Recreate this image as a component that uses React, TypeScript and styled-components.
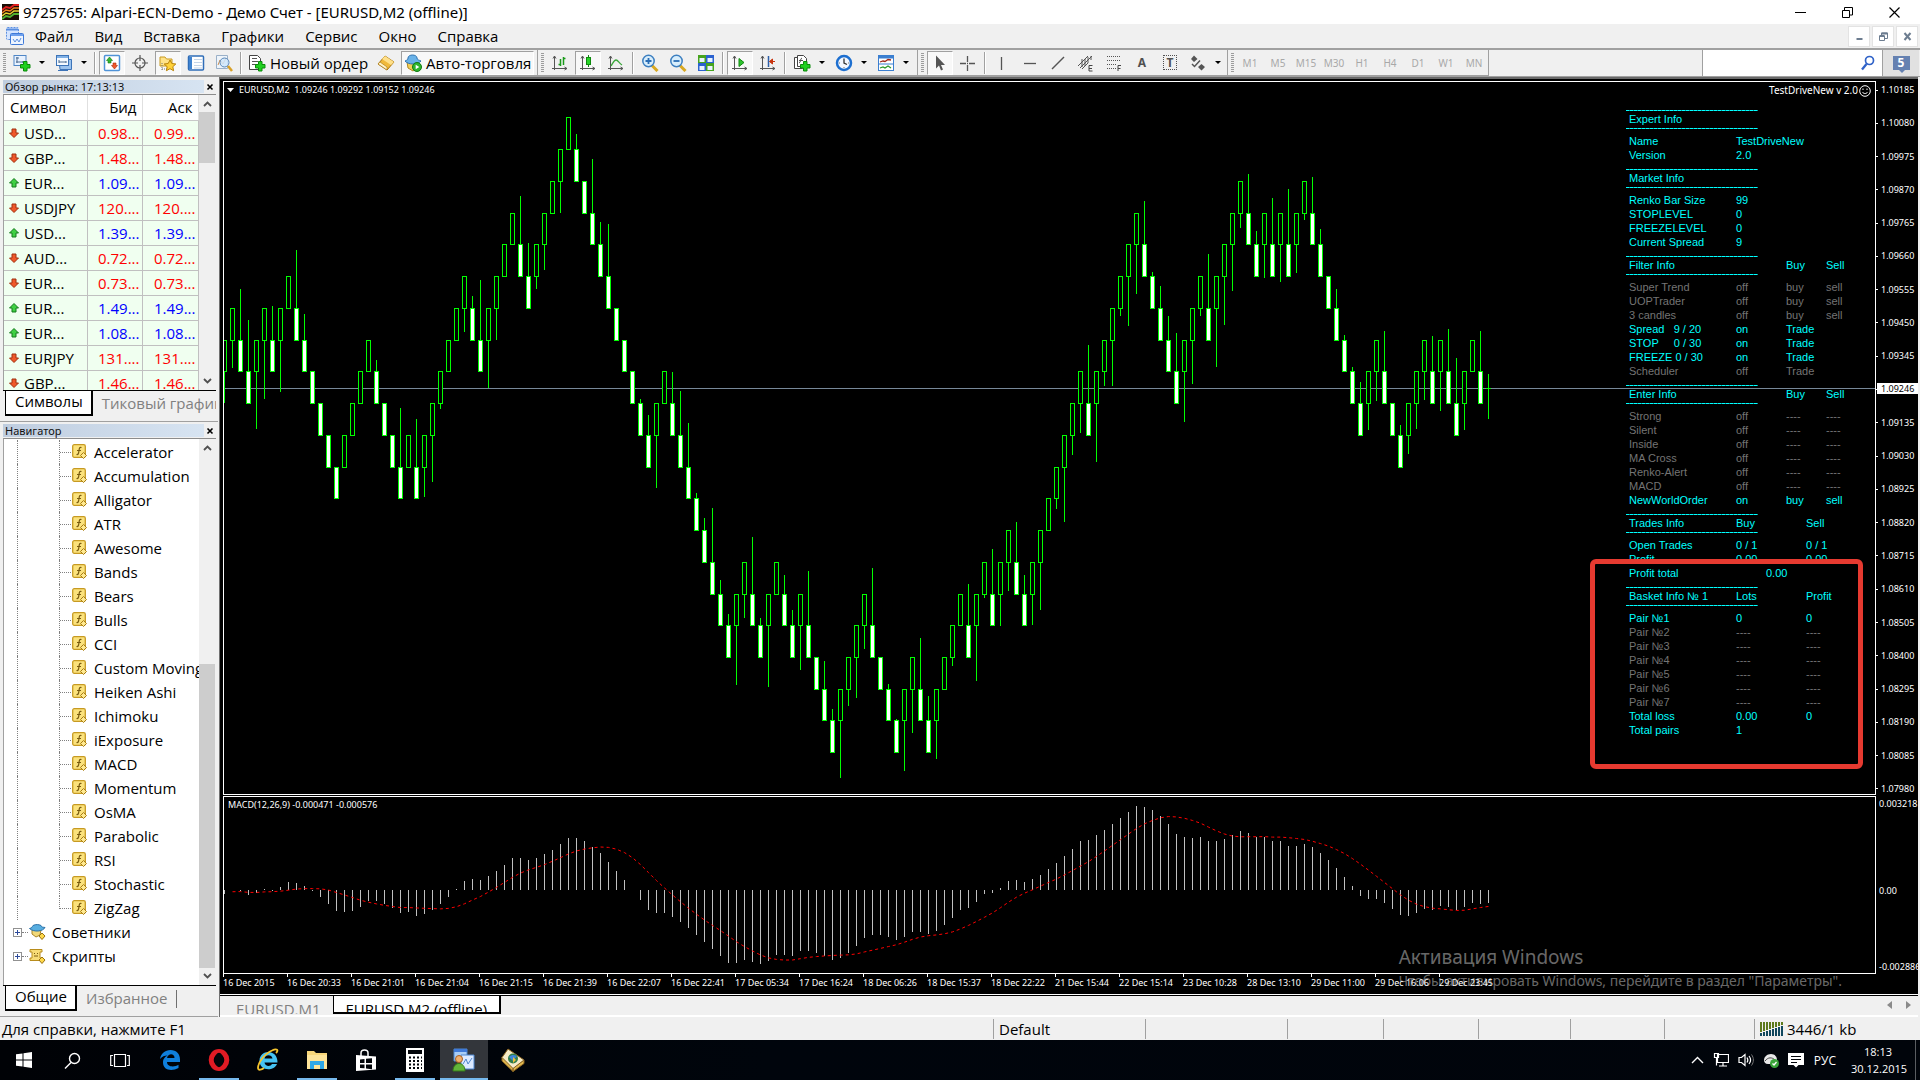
import React from "react";
import styled, { createGlobalStyle, css } from "styled-components";

const UI = `"Open Sans", "Noto Sans", sans-serif`;
const SMALL = `"Noto Sans", "Open Sans", sans-serif`;

const GlobalStyle = createGlobalStyle`
  * { box-sizing: border-box; }
  body { margin: 0; background: #f0f0f0; }
  button { font: inherit; color: inherit; background: none; border: 0; padding: 0; margin: 0; }
  ul, ol { list-style: none; margin: 0; padding: 0; }
  svg { display: block; flex: none; }
`;

/* ---------- shell ---------- */

const Shell = styled.div`
  display: flex;
  flex-direction: column;
  height: 100vh;
  overflow: hidden;
  background: #f0f0f0;
  color: #000;
  font: 15px/20px ${UI};
`;

const TitleBar = styled.header`
  display: flex;
  align-items: center;
  flex: none;
  height: 24px;
  padding: 0 2px;
  background: #fff;
`;

const TitleText = styled.h1`
  flex: 1;
  margin: 0;
  padding-left: 4px;
  font: 15px/20px ${SMALL};
`;

const WindowButton = styled.button`
  display: flex;
  align-items: center;
  justify-content: center;
  width: 47px;
  height: 22px;
`;

const MenuBar = styled.nav`
  display: flex;
  align-items: center;
  flex: none;
  height: 26px;
  padding-left: 5px;
  border-bottom: 2px solid #a0a0a0;
`;

const MenuList = styled.ul`
  display: flex;
  flex: 1;
`;

const MenuItem = styled.button`
  padding: 0 11px 0 10px;
  line-height: 22px;
`;

const ChildButton = styled.button`
  display: flex;
  align-items: center;
  justify-content: center;
  width: 22px;
  height: 21px;
  margin-right: 2px;
  background: #fff;
  border: 1px solid #e3e3e3;
`;

/* ---------- toolbar ---------- */

const ToolRow = styled.div`
  display: flex;
  flex: none;
  height: 27px;
  border-bottom: 1px solid #a0a0a0;
`;

const Group = styled.div<{ $w: number }>`
  display: flex;
  align-items: center;
  flex: none;
  gap: 2px;
  width: ${(p) => p.$w}px;
  padding-left: 3px;
  border-right: 1px solid #a0a0a0;
  border-bottom: 1px solid #a0a0a0;
  background: #f0f0f0;
`;

const Grip = styled.span`
  width: 3px;
  height: 20px;
  margin-right: 1px;
  background: repeating-linear-gradient(#9c9c9c 0 1px, #f0f0f0 1px 2px);
`;

const Sep = styled.span`
  width: 2px;
  height: 22px;
  margin: 0 1px;
  border-left: 1px solid #a0a0a0;
  border-right: 1px solid #fff;
`;

const Tool = styled.button<{ $on?: boolean; $wide?: boolean }>`
  display: flex;
  align-items: center;
  justify-content: center;
  flex: none;
  gap: 4px;
  height: 24px;
  width: ${(p) => (p.$wide ? "auto" : "26px")};
  padding: ${(p) => (p.$wide ? "0 2px" : "0")};
  white-space: nowrap;
  border: 1px solid transparent;
  ${(p) =>
    p.$on &&
    css`
      background: #f8f8f8;
      border-color: #a0a0a0 #fff #fff #a0a0a0;
    `}
`;

const Caret = styled.button`
  width: 14px;
  height: 24px;
  margin-left: -2px;
  display: flex;
  align-items: center;
  justify-content: center;
  &::after {
    content: "";
    border: 3px solid transparent;
    border-top-color: #000;
    border-bottom: 0;
  }
`;

const Period = styled.button`
  width: 26px;
  text-align: center;
  color: #a8a8a8;
  font: 10px/14px ${SMALL};
`;

const Letter = styled.span<{ $boxed?: boolean }>`
  width: 14px;
  text-align: center;
  color: #505050;
  font: bold 12px/13px ${SMALL};
  border: ${(p) => (p.$boxed ? "1px dotted #505050" : "0")};
`;

const ToolFill = styled.div`
  flex: 1;
`;

const Search = styled.label`
  display: flex;
  align-items: center;
  width: 181px;
  padding-right: 7px;
  background: #fff;
  border-left: 1px solid #a0a0a0;
  border-right: 1px solid #a0a0a0;
`;

const SearchInput = styled.input`
  flex: 1;
  min-width: 0;
  border: 0;
  outline: 0;
  background: transparent;
  font: 13px/18px ${UI};
`;

const ChatButton = styled.button`
  display: flex;
  align-items: center;
  justify-content: center;
  width: 36px;
  margin-right: 1px;
  background: #e1e1e1;
`;

const ChatBadge = styled.span`
  position: relative;
  width: 17px;
  height: 14px;
  color: #fff;
  background: #6581b1;
  font: bold 12px/13px ${SMALL};
  &::after {
    content: "";
    position: absolute;
    left: 5px;
    top: 13px;
    border: 4px solid transparent;
    border-top-color: #6581b1;
    border-bottom: 0;
  }
`;

/* ---------- side panels ---------- */

const Body = styled.main`
  display: flex;
  flex: 1;
  min-height: 0;
`;

const Side = styled.aside`
  display: flex;
  flex-direction: column;
  flex: none;
  width: 220px;
  padding-top: 1px;
  border-right: 1px solid #707070;
`;

const Panel = styled.section<{ $grow?: boolean }>`
  display: flex;
  flex-direction: column;
  flex: ${(p) => (p.$grow ? "1" : "none")};
  min-height: 0;
  margin-right: 1px;
  padding: 1px 2px 5px 3px;
  border-bottom: 1px solid #a0a0a0;
`;

const PanelHead = styled.div`
  display: flex;
  align-items: center;
  height: 15px;
`;

const PanelTitle = styled.h2`
  flex: 1;
  margin: 0;
  padding-left: 2px;
  color: #111;
  font: 11px/13px ${SMALL};
  background: linear-gradient(90deg, #bfcddf, #d7e4f2);
`;

const PanelClose = styled.button`
  display: flex;
  justify-content: center;
  width: 12px;
`;

const ListFrame = styled.div<{ $h?: number }>`
  display: flex;
  flex: ${(p) => (p.$h ? "none" : "1")};
  height: ${(p) => (p.$h ? p.$h + "px" : "auto")};
  min-height: 0;
  overflow: hidden;
  background: #fff;
  border-top: 1px solid #8c8c8c;
  border-left: 1px solid #a0a0a0;
`;

const ListBody = styled.div`
  flex: 1;
  min-width: 0;
  overflow: hidden;
`;

const ScrollTrack = styled.div`
  display: flex;
  flex-direction: column;
  align-items: center;
  width: 17px;
  padding: 6px 1px 6px 0;
  background: #f0f0f0;
`;

const Thumb = styled.span<{ $grow: number }>`
  width: 100%;
  flex: ${(p) => p.$grow};
  background: #cdcdcd;
`;

const Gap = styled.span<{ $grow: number }>`
  flex: ${(p) => p.$grow};
`;

const ArrowPad = styled.span`
  height: 5px;
`;

const Quotes = styled.table`
  width: 194px;
  table-layout: fixed;
  border-collapse: collapse;
  th {
    height: 25px;
    padding: 0 5px 0 6px;
    font-weight: 400;
    text-align: right;
    border-right: 1px solid #e0e0e0;
    border-bottom: 1px solid #c8c8c8;
  }
  th:first-child { text-align: left; }
`;

const SymbolCell = styled.td`
  height: 25px;
  padding: 0 0 0 4px;
  background: #f0fff0;
  border-right: 1px solid #c0c0c0;
  border-bottom: 1px solid #c0c0c0;
`;

const SymbolName = styled.span`
  display: flex;
  align-items: center;
  gap: 4px;
  white-space: nowrap;
`;

const PriceCell = styled.td<{ $up: boolean }>`
  padding: 0 2px 0 0;
  text-align: right;
  color: ${(p) => (p.$up ? "#0000ff" : "#ff0000")};
  background: #f0fff0;
  border-right: 1px solid #c0c0c0;
  border-bottom: 1px solid #c0c0c0;
`;

const TabStrip = styled.div`
  display: flex;
  height: 26px;
  padding-left: 2px;
  overflow: hidden;
  border-top: 1px solid #000;
`;

const Tab = styled.button<{ $active?: boolean }>`
  flex: none;
  padding: 0 8px 2px 9px;
  white-space: nowrap;
  color: ${(p) => (p.$active ? "#000" : "#808080")};
  ${(p) =>
    p.$active &&
    css`
      margin-top: -1px;
      background: #fff;
      border: 1px solid #000;
      border-width: 0 2px 2px 1px;
    `}
`;

const TabEnd = styled.span`
  width: 1px;
  height: 18px;
  margin-top: 4px;
  background: #707070;
`;

const Tree = styled.ul`
  padding-top: 1px;
`;

const TreeRow = styled.li`
  display: flex;
  align-items: center;
  height: 24px;
  padding-left: 13px;
  white-space: nowrap;
`;

const Trunk = styled.span`
  flex: none;
  width: 42px;
  height: 24px;
  border-left: 1px dotted #808080;
`;

const Branch = styled.span<{ $last?: boolean }>`
  display: flex;
  flex: none;
  width: 13px;
  height: 24px;
  &::before {
    content: "";
    width: 11px;
    height: 12px;
    border-left: 1px dotted #808080;
    border-bottom: 1px dotted #808080;
  }
  ${(p) => !p.$last && css`border-left: 1px dotted #808080; &::before { border-left: 0; }`}
`;

const TreeLabel = styled.span`
  padding-left: 6px;
`;

const RootRow = styled(TreeRow)`
  padding-left: 9px;
`;

const Expander = styled.button`
  display: flex;
  align-items: center;
  justify-content: center;
  width: 9px;
  height: 9px;
  border: 1px solid #919191;
  background: #fff;
`;

const Dots = styled.span`
  width: 6px;
  margin-right: 1px;
  border-top: 1px dotted #808080;
`;

/* ---------- chart ---------- */

const Work = styled.div`
  display: flex;
  flex-direction: column;
  flex: 1;
  min-width: 0;
  margin-right: 2px;
  border-top: 2px solid #696969;
`;

const ChartWindow = styled.section`
  position: relative;
  display: flex;
  flex-direction: column;
  flex: 1;
  min-height: 0;
  padding: 2px 0 0 3px;
  background: #000;
  color: #fff;
  font: 9px/12px ${SMALL};
`;

const PaneRow = styled.div<{ $h?: number }>`
  display: flex;
  flex: ${(p) => (p.$h ? "none" : "1")};
  height: ${(p) => (p.$h ? p.$h + "px" : "auto")};
  min-height: 0;
  margin-bottom: ${(p) => (p.$h ? 0 : 1)}px;
`;

const Pane = styled.div`
  position: relative;
  flex: 1;
  min-width: 0;
  overflow: hidden;
  border: 1px solid #fff;
`;

const PaneCaption = styled.div<{ $x: number }>`
  position: absolute;
  left: ${(p) => p.$x}px;
  top: 2px;
  display: flex;
  align-items: center;
  gap: 5px;
  white-space: pre;
`;

const ExpertTag = styled.div`
  position: absolute;
  right: 4px;
  top: 2px;
  display: flex;
  align-items: center;
  gap: 1px;
  font: 10px/13px ${SMALL};
`;

const Drawing = styled.svg`
  width: 100%;
  height: 100%;
`;

const Axis = styled.ol`
  position: relative;
  display: flex;
  flex-direction: column;
  justify-content: space-between;
  width: 42px;
  padding: 3px 0 0;
`;

const AxisItem = styled.li`
  display: flex;
  align-items: center;
  gap: 3px;
  height: 12px;
  &::before {
    content: "";
    width: 2px;
    height: 1px;
    background: #fff;
  }
`;

const BidTag = styled.span`
  position: absolute;
  left: 1px;
  right: 0;
  top: 302px;
  padding-left: 4px;
  color: #000;
  background: #fff;
  line-height: 11px;
`;

const MacdAxis = styled.ol`
  display: grid;
  grid-template-rows: 12px 74fr 12px 64fr 12px;
  width: 42px;
  padding: 2px 0 1px;
  overflow: hidden;
`;

const MacdItem = styled.li<{ $row: number }>`
  grid-row: ${(p) => p.$row};
  padding-left: 3px;
  white-space: nowrap;
`;

const Dates = styled.ol`
  display: flex;
  height: 20px;
  overflow: hidden;
`;

const DateItem = styled.li`
  flex: none;
  width: 64px;
  white-space: nowrap;
  &::before {
    content: "";
    display: block;
    width: 1px;
    height: 3px;
    background: #fff;
  }
`;

const Info = styled.div`
  position: absolute;
  right: 20px;
  top: 28px;
  width: 229px;
  font: 11px/14px "Liberation Sans", Arial, sans-serif;
`;

const InfoSection = styled.section`
  padding-bottom: 7px;
`;

const InfoRule = styled.hr`
  width: 132px;
  height: 1px;
  margin: 0;
  border: 0;
  background: repeating-linear-gradient(90deg, #00ffff 0 3px, #00a0a0 3px 4px);
`;

const InfoRow = styled.div<{ $cols: string; $dim?: boolean; $head?: boolean }>`
  display: grid;
  grid-template-columns: ${(p) => p.$cols};
  padding-left: 3px;
  line-height: ${(p) => (p.$head ? 17 : 14)}px;
  white-space: pre;
  color: ${(p) => (p.$dim ? "#747474" : "#00ffff")};
`;

const InfoRows = styled.div`
  padding-top: 5px;
`;

const Highlight = styled.div`
  position: absolute;
  right: 12px;
  top: 477px;
  width: 273px;
  height: 210px;
  border: 5px solid #e63a30;
  border-radius: 6px;
`;

const Watermark = styled.div`
  position: absolute;
  right: 76px;
  bottom: 3px;
  color: rgba(255, 255, 255, 0.42);
  font: 14px/20px ${SMALL};
  white-space: nowrap;
`;

const WatermarkTitle = styled.div`
  font-size: 19px;
  line-height: 28px;
`;

const ChartTabs = styled.div`
  display: flex;
  flex: none;
  height: 23px;
  padding-bottom: 2px;
  border-top: 1px solid #fff;
  border-bottom: 2px solid #fff;
  background: #f0f0f0;
`;

const ChartTabRow = styled.div`
  display: flex;
  flex: 1;
  padding-left: 4px;
  border-top: 1px solid #000;
`;

const ChartTab = styled.button<{ $active?: boolean }>`
  height: 18px;
  padding: 5px 12px 0;
  overflow: hidden;
  line-height: 17px;
  color: ${(p) => (p.$active ? "#000" : "#808080")};
  ${(p) =>
    p.$active &&
    css`
      background: #fff;
      border: 1px solid #000;
      border-width: 0 2px 2px 1px;
    `}
`;

const TabScroll = styled.div`
  display: flex;
  align-items: center;
  gap: 14px;
  margin-left: auto;
  padding-right: 7px;
`;

/* ---------- status + taskbar ---------- */

const Status = styled.footer`
  display: flex;
  align-items: center;
  flex: none;
  height: 23px;
  overflow: hidden;
`;

const StatusText = styled.span`
  flex: 1;
  padding-left: 2px;
`;

const StatusCell = styled.span<{ $w: number }>`
  display: flex;
  align-items: center;
  gap: 3px;
  width: ${(p) => p.$w}px;
  height: 20px;
  padding-left: 5px;
  border-left: 1px solid #a0a0a0;
`;

const TaskBar = styled.div`
  display: flex;
  flex: none;
  height: 40px;
  color: #fff;
  background: linear-gradient(90deg, #000206, #00050c 40%, #01050b);
`;

const TaskButton = styled.button<{ $run?: boolean; $focus?: boolean; $first?: boolean }>`
  display: flex;
  align-items: center;
  justify-content: center;
  width: 48px;
  margin-left: ${(p) => (p.$first ? 0 : 1)}px;
  background: ${(p) => (p.$focus ? "#33363b" : "none")};
  position: relative;
  &::after {
    content: "";
    display: ${(p) => (p.$run ? "block" : "none")};
    position: absolute;
    left: ${(p) => (p.$focus ? 0 : 4)}px;
    right: ${(p) => (p.$focus ? 0 : 4)}px;
    bottom: 0;
    height: 2px;
    background: #76b9ed;
  }
`;

const TaskPinned = styled.div`
  display: flex;
  padding-right: 1px;
`;

const Tray = styled.div`
  display: flex;
  align-items: center;
  gap: 8px;
  margin-left: auto;
  font: 12px/17px ${UI};
`;

const TrayIcons = styled.div`
  display: flex;
  align-items: center;
  gap: 9px;
`;

const Lang = styled.span`
  padding: 0 7px 0 2px;
`;

const Clock = styled.time`
  width: 54px;
  margin-right: 2px;
  text-align: center;
  white-space: nowrap;
  font: 11px/17px ${UI};
`;

const ShowDesktop = styled.button`
  width: 5px;
  height: 40px;
  border-left: 1px solid #5a5d61;
`;

/* ---------- data ---------- */

const LEVELS = [117, 149, 181, 213, 244, 276, 308, 340, 371, 403, 435, 467, 498, 530, 562, 594, 625, 657, 689, 720, 752, 784];

// one entry per brick: upper level, direction, end of the shadow
const BRICKS = `7u403 6u368 7d289 8d320 7u429 6u399 7d306 6u392 5u 6d250 7d314 8d 9d 10d 11d 10u 9u 8u 7u 8d360
9d 10d 11d408 10u 11d419 10u497 9u482 8u409 7u 6u 5u332 6d296 7d280 6u388 5u340 4u 3u 4d196 5d243 4u289
3u270 2u 1u213 0u 1d134 2d 3d159 4d222 5d224 6d 7d 8d 9d399 10d415 9u488 8u 9d372 10d391 11d423 12d493
13d518 14d508 15d580 16d614 15u685 14u618 15d537 16d618 15u687 14u 15d575 16d610 15u670 16d571 17d 18d661 19d709 18u778 17u706 16u698
15u649 16d568 17d 18d684 19d719 18u771 17u733 18d638 19d696 18u759 17u 16u666 15u 16d584 15u681 14u598 15d549 14u626 13u591 14d522
15d575 14u625 13u610 12u 11u509 10u522 9u455 8u433 9d345 8u462 7u386 6u386 5u316 4u326 3u294 4d201 5d272 6d286 7d316 8d333
7u422 6u384 5u316 6d254 5u367 4u325 3u291 2u228 3d174 4d231 3u278 4d198 3u282 4d189 3u273 2u220 3d177 4d229 5d 6d289
7d335 8d367 9d382 8u430 7u401 8d331 9d 10d425 9u454 8u429 7u400 8d336 7u411 8d329 9d358 8u430 7u 8d331`
  .split(/\s+/)
  .map((s) => {
    const m = /^(\d+)([ud])(\d*)$/.exec(s)!;
    return { top: Number(m[1]), up: m[2] === "u", wick: m[3] ? Number(m[3]) : null };
  });

const STEP = 8;
const ORIGIN = 0.5;
const barX = (i: number) => ORIGIN + i * STEP;

function macdSeries() {
  const closes = BRICKS.map((b) => -(b.up ? b.top : b.top + 1));
  closes.push(-8.54);
  let fast = -7.7;
  let slow = -7.5;
  const main = closes.map((c) => {
    fast += (c - fast) * (2 / 13);
    slow += (c - slow) * (2 / 27);
    return (fast - slow) / 1000;
  });
  const signal = main.map((_, i) => {
    const part = main.slice(Math.max(0, i - 8), i + 1);
    return part.reduce((a, b) => a + b, 0) / part.length;
  });
  return { main, signal };
}

const MACD = macdSeries();
const MACD_ZERO = 93;
const macdY = (v: number) => MACD_ZERO - v / 0.000035;

const QUOTES: [string, string, string, boolean][] = [
  ["USD...", "0.98...", "0.99...", false],
  ["GBP...", "1.48...", "1.48...", false],
  ["EUR...", "1.09...", "1.09...", true],
  ["USDJPY", "120....", "120....", false],
  ["USD...", "1.39...", "1.39...", true],
  ["AUD...", "0.72...", "0.72...", false],
  ["EUR...", "0.73...", "0.73...", false],
  ["EUR...", "1.49...", "1.49...", true],
  ["EUR...", "1.08...", "1.08...", true],
  ["EURJPY", "131....", "131....", false],
  ["GBP...", "1.46...", "1.46...", false],
];

const INDICATORS = ["Accelerator", "Accumulation", "Alligator", "ATR", "Awesome", "Bands", "Bears", "Bulls", "CCI", "Custom Moving", "Heiken Ashi", "Ichimoku", "iExposure", "MACD", "Momentum", "OsMA", "Parabolic", "RSI", "Stochastic", "ZigZag"];

const PRICES = ["1.10185", "1.10080", "1.09975", "1.09870", "1.09765", "1.09660", "1.09555", "1.09450", "1.09345", "", "1.09135", "1.09030", "1.08925", "1.08820", "1.08715", "1.08610", "1.08505", "1.08400", "1.08295", "1.08190", "1.08085", "1.07980"];

const DATES = ["16 Dec 2015", "16 Dec 20:33", "16 Dec 21:01", "16 Dec 21:04", "16 Dec 21:15", "16 Dec 21:39", "16 Dec 22:07", "16 Dec 22:41", "17 Dec 05:34", "17 Dec 16:24", "18 Dec 06:26", "18 Dec 15:37", "18 Dec 22:22", "21 Dec 15:44", "22 Dec 15:14", "23 Dec 10:28", "28 Dec 13:10", "29 Dec 11:00", "29 Dec 16:06", "29 Dec 23:45"];

const WIDE = "107px 50px 40px auto";
const PAIR = "107px 70px auto";
const DASH = "----";

type Row = { cells: string[]; dim?: boolean; cols?: string };
type Block = { head: string[]; cols: string; rows: Row[] };

const dim = (...cells: string[]): Row => ({ cells, dim: true });
const lit = (...cells: string[]): Row => ({ cells });

const BLOCKS: Block[] = [
  { head: ["Expert Info"], cols: WIDE, rows: [lit("Name", "TestDriveNew"), lit("Version", "2.0")] },
  { head: ["Market Info"], cols: WIDE, rows: [lit("Renko Bar Size", "99"), lit("STOPLEVEL", "0"), lit("FREEZELEVEL", "0"), lit("Current Spread", "9")] },
  {
    head: ["Filter Info", "", "Buy", "Sell"],
    cols: WIDE,
    rows: [dim("Super Trend", "off", "buy", "sell"), dim("UOPTrader", "off", "buy", "sell"), dim("3 candles", "off", "buy", "sell"), lit("Spread   9 / 20", "on", "Trade"), lit("STOP     0 / 30", "on", "Trade"), lit("FREEZE 0 / 30", "on", "Trade"), dim("Scheduler", "off", "Trade")],
  },
  {
    head: ["Enter Info", "", "Buy", "Sell"],
    cols: WIDE,
    rows: [...["Strong", "Silent", "Inside", "MA Cross", "Renko-Alert", "MACD"].map((n) => dim(n, "off", DASH, DASH)), lit("NewWorldOrder", "on", "buy", "sell")],
  },
  {
    head: ["Trades Info", "Buy", "Sell"],
    cols: PAIR,
    rows: [lit("Open Trades", "0 / 1", "0 / 1"), lit("Profit", "0.00", "0.00"), { cells: ["Profit total", "0.00"], cols: "137px auto" }],
  },
  {
    head: ["Basket Info № 1", "Lots", "Profit"],
    cols: PAIR,
    rows: [lit("Pair №1", "0", "0"), ...[2, 3, 4, 5, 6, 7].map((n) => dim(`Pair №${n}`, DASH, DASH)), lit("Total loss", "0.00", "0"), lit("Total pairs", "1")],
  },
];

/* ---------- icons ---------- */

const Svg = ({ s = 18, w, h, children }: { s?: number; w?: number; h?: number; children: React.ReactNode }) => (
  <svg width={w ?? s} height={h ?? s} viewBox={`0 0 ${w ?? s} ${h ?? s}`} fill="none" aria-hidden="true">
    {children}
  </svg>
);

const Plus = ({ x, y }: { x: number; y: number }) => (
  <path transform={`translate(${x} ${y})`} d="M3.5 .5h3.500v3h3v3.500h-3v3h-3.500v-3h-3v-3.500h3z" fill="#1fd01f" stroke="#0a8a0a" />
);

const AxisMark = () => <path d="M3.500 2v14M1 14.500h15M2 4.500l1.500-2.500 1.500 2.500M13.500 13l2.500 1.500-2.500 1.500" stroke="#555" />;

const I = {
  logo: (
    <Svg w={17} h={18}>
      <path d="M0 1h17v16H0z" fill="#1a0d05" />
      <path d="M0 7l4-3 4 1 4-3 5 0" stroke="#e02020" strokeWidth="2" />
      <path d="M0 10l4-3 4 1 4-3 5 0" stroke="#f08020" strokeWidth="1.500" />
      <path d="M0 13l4-3 4 1 4-3 5 0" stroke="#e8d030" strokeWidth="1.500" />
      <path d="M0 16l4-3 4 1 4-3 5 0" stroke="#50b030" strokeWidth="2" />
    </Svg>
  ),
  doc: (
    <Svg s={20}>
      <rect x="1.500" y="1.500" width="12" height="12" rx="1" fill="#d5e5ff" stroke="#5b8fe0" strokeDasharray="2 1" />
      <path d="M2 3.500h11" stroke="#5b8fe0" strokeWidth="2" />
      <rect x="5.500" y="7.500" width="13" height="11" rx="1" fill="#eef5ff" stroke="#3f7ad8" />
      <path d="M6 9h12" stroke="#6ea0ee" strokeWidth="2" />
      <path d="M8 13l2 3 2-3 2 3 2-4" stroke="#5b8fe0" />
    </Svg>
  ),
  newChart: (
    <Svg>
      <rect x="1" y="1.500" width="12" height="10" fill="#e8f2ff" stroke="#4f86c6" />
      <path d="M3 4h3M4 3v6M3 8h7M10 7v2" stroke="#4a6a90" />
      <Plus x={7} y={7} />
    </Svg>
  ),
  profiles: (
    <Svg>
      <path d="M4 5.500h12.500v10H5z" fill="#9cc3ee" stroke="#3d74b8" />
      <rect x="1.500" y="1.500" width="12" height="10" fill="#f4f9ff" stroke="#3d74b8" />
      <path d="M2 3h11" stroke="#7fb0e6" strokeWidth="2" />
      <path d="M4 6v3M4 8h7M11 7v2" stroke="#4a6a90" />
      <path d="M3 16.500h10" stroke="#3d74b8" />
    </Svg>
  ),
  market: (
    <Svg>
      <rect x="1.500" y="1.500" width="15" height="15" rx="1" fill="#fff" stroke="#4f93d8" strokeWidth="1.500" />
      <path d="M6.500 3l3 3.500H8v2.500H5V6.500H3.500z" fill="#35b535" stroke="#0d7a0d" strokeWidth=".6" />
      <path d="M11.500 15l-3-3.500H10V9h3v2.500h1.500z" fill="#f0582a" stroke="#a82a08" strokeWidth=".6" />
    </Svg>
  ),
  target: (
    <Svg>
      <circle cx="9" cy="9" r="5" stroke="#555" strokeWidth="1.200" />
      <path d="M9 1v6M9 11v6M1 9h6M11 9h6" stroke="#555" strokeWidth="1.200" />
    </Svg>
  ),
  folder: (
    <Svg>
      <path d="M1 3h5l1.500 2H13v7H1z" fill="#ffe38a" stroke="#c89a20" />
      <path d="M3 9v7M3 15h5" stroke="#777" strokeDasharray="1 1" />
      <path d="M11 6l1.800 3.500 4 .5-3 2.700.8 4-3.600-2-3.600 2 .8-4-3-2.700 4-.5z" fill="#ffd23a" stroke="#b8820a" />
    </Svg>
  ),
  dataWin: (
    <Svg>
      <rect x="1.500" y="2" width="15" height="14" rx="1" fill="#fff" stroke="#2f6db8" strokeWidth="1.500" />
      <path d="M2 3h3v12H2z" fill="#3f83d0" />
      <path d="M7 5.500h8M7 8.500h8M7 11.500h8M7 14h8" stroke="#c5d5e8" />
    </Svg>
  ),
  tester: (
    <Svg>
      <path d="M1.500 1.500h11v13h-11z" fill="#eef4fa" stroke="#9ab0c8" />
      <path d="M3 11l2-5 3 4 3-6" stroke="#d09050" />
      <circle cx="9.500" cy="8.500" r="4.500" fill="#cfe6fb" fillOpacity=".85" stroke="#5a87b8" />
      <path d="M13 12l4 5" stroke="#d8a028" strokeWidth="2.500" />
    </Svg>
  ),
  order: (
    <Svg>
      <path d="M1.500 1.500h8l3 3v11h-11z" fill="#fff" stroke="#444" />
      <path d="M4 4.500h5M4 7.500h6M4 10.500h4" stroke="#555" />
      <Plus x={7} y={7} />
    </Svg>
  ),
  editor: (
    <Svg>
      <path d="M1 10L8 2l9 6-7 8z" fill="#f0b93a" stroke="#a8740c" />
      <path d="M8 2l9 6-3 3-9-6z" fill="#ffe08a" />
      <path d="M1 10l9 6v-3L3 8z" fill="#fff3c8" stroke="#a8740c" strokeWidth=".6" />
    </Svg>
  ),
  hat: (
    <Svg>
      <path d="M3 8h11l-1 6-4 3-5-3z" fill="#f1cf58" stroke="#b08820" />
      <path d="M1 7c2-1 3-1 3-3 0-4 9-4 9 0 0 2 2 2 4 3-3 4-13 4-16 0z" fill="#69b2e8" stroke="#2e72b0" />
      <circle cx="13" cy="13" r="4.500" fill="#2fb52f" stroke="#117a11" />
      <path d="M11.700 10.700l3.600 2.300-3.600 2.300z" fill="#fff" />
    </Svg>
  ),
  bars: (
    <Svg>
      <AxisMark />
      <path d="M9.500 5v7M7.500 10.500h2M12.500 3v8M12.500 4.500h2" stroke="#1a9a1a" strokeWidth="1.500" />
    </Svg>
  ),
  candle: (
    <Svg>
      <AxisMark />
      <path d="M9.500 1v12" stroke="#0f8a0f" />
      <rect x="7.500" y="3.500" width="4" height="7" fill="#27d427" stroke="#0f8a0f" />
    </Svg>
  ),
  line: (
    <Svg>
      <AxisMark />
      <path d="M4 12c2-3 3-6 5-6s3 3 6 5" stroke="#3aa63a" strokeWidth="1.300" />
    </Svg>
  ),
  zoomIn: (
    <Svg>
      <path d="M10.500 11l6 6" stroke="#d8a820" strokeWidth="3" />
      <circle cx="7.500" cy="7" r="5.700" fill="#d8eefc" stroke="#3c7fc0" strokeWidth="1.500" />
      <path d="M4.500 7h6M7.500 4v6" stroke="#2a6db5" strokeWidth="1.800" />
    </Svg>
  ),
  zoomOut: (
    <Svg>
      <path d="M10.500 11l6 6" stroke="#d8a820" strokeWidth="3" />
      <circle cx="7.500" cy="7" r="5.700" fill="#d8eefc" stroke="#3c7fc0" strokeWidth="1.500" />
      <path d="M4.500 7h6" stroke="#2a6db5" strokeWidth="1.800" />
    </Svg>
  ),
  tiles: (
    <Svg>
      <path d="M1 1h8v8H1zM9 9h8v8H9z" fill="#46a41e" />
      <path d="M9 1h8v8H9zM1 9h8v8H1z" fill="#2b62d0" />
      <path d="M2.500 4h5v4h-5zM10.500 4h5v4h-5zM2.500 12h5v4h-5zM10.500 12h5v4h-5z" fill="#eaf4ff" />
    </Svg>
  ),
  autoScroll: (
    <Svg>
      <AxisMark />
      <path d="M8 4.500l5 4-5 4z" fill="#2fc22f" stroke="#0f8a0f" />
    </Svg>
  ),
  shift: (
    <Svg>
      <AxisMark />
      <path d="M9.500 2v11" stroke="#2c5fa8" strokeWidth="1.500" />
      <path d="M16 7.500h-4M13.500 5l-3 2.500 3 2.500z" stroke="#c8320c" fill="#c8320c" />
    </Svg>
  ),
  indicator: (
    <Svg>
      <path d="M1.500 3.500h8v11h-8z" fill="#fff" stroke="#444" />
      <path d="M4.500 1.500h6l3 3v8h-9z" fill="#fff" stroke="#444" />
      <path d="M6 9c2 0 1-5 3-5M6 6.500h4" stroke="#555" />
      <Plus x={7} y={7} />
    </Svg>
  ),
  clock: (
    <Svg>
      <circle cx="9" cy="9" r="7" fill="#f3f8ff" stroke="#1d6fd0" strokeWidth="2.500" />
      <path d="M9 4.500V9l3 1.500" stroke="#333" strokeWidth="1.300" />
      <path d="M4 9h1M13 9h1M9 13v1" stroke="#777" />
    </Svg>
  ),
  template: (
    <Svg>
      <rect x="1.500" y="1.500" width="15" height="15" fill="#fff" stroke="#3b7fd0" />
      <path d="M1 3h16" stroke="#3b7fd0" strokeWidth="3" />
      <path d="M1 10h16" stroke="#3b7fd0" />
      <path d="M3 8l3-1 2 .5 3-2 3 .5" stroke="#a02818" strokeWidth="1.300" />
      <path d="M3 14l3-1 2 1 3-2 3 2" stroke="#2a9a2a" strokeWidth="1.300" />
    </Svg>
  ),
  cursor: (
    <Svg>
      <path d="M5 1.500v13l3-3 2 5 2-1-2-4.500h4z" fill="#555" />
    </Svg>
  ),
  cross: (
    <Svg>
      <path d="M8.500 2v6M8.500 11v6M1 9.500h6M10 9.500h6M8 9.500h1" stroke="#555" strokeWidth="1.300" />
    </Svg>
  ),
  vline: <Svg><path d="M8.500 3v13" stroke="#555" strokeWidth="1.300" /></Svg>,
  hline: <Svg><path d="M3 9.500h12" stroke="#555" strokeWidth="1.300" /></Svg>,
  trend: <Svg><path d="M3 15L15 3" stroke="#555" strokeWidth="1.500" /></Svg>,
  channel: (
    <Svg>
      <path d="M1 12L11 2M3 14L15 2M5 15l6-6M5 5v8M8 5v7M11 3v6M14 2v4" stroke="#555" />
      <path d="M15.500 11.500H12v5.500h3.500M12 14.500h3" stroke="#444" />
    </Svg>
  ),
  fibo: (
    <Svg>
      <path d="M2 2.500h14M2 6.500h14M2 10.500h10M2 14.500h9" stroke="#555" strokeDasharray="1 1" />
      <path d="M16 11.500h-3V17M13 14.500h2.500" stroke="#444" />
    </Svg>
  ),
  arrows: (
    <Svg>
      <path d="M5 1.500l3.500 3.500-3.500 3-3-3zM12.500 10l3.500 3-3.500 3.500-3.500-3.500z" fill="#555" />
      <path d="M3 10l2.500 2.500 5.500-6" stroke="#555" strokeWidth="1.500" />
    </Svg>
  ),
  find: (
    <Svg w={14} h={16}>
      <circle cx="8.500" cy="5.500" r="4" stroke="#2f62c8" strokeWidth="1.700" />
      <path d="M5.500 9L1 14.500" stroke="#2f62c8" strokeWidth="2.300" />
    </Svg>
  ),
};

const ArrowMark = ({ up }: { up: boolean }) => (
  <Svg w={12} h={12}>
    {up ? (
      <path d="M6 1.500l4.500 4.500H8v4H4V6H1.500z" fill="#3fd043" stroke="#147a1c" />
    ) : (
      <path d="M6 10.500L1.500 6H4V2h4v4h2.500z" fill="#f0582a" stroke="#a03010" />
    )}
  </Svg>
);

const FuncIcon = () => (
  <Svg s={16}>
    <rect x=".7" y=".7" width="12.600" height="12.600" rx="1.500" fill="#fbe27c" stroke="#c79a22" strokeWidth="1.300" />
    <path d="M9.500 3.500c-2-.8-2.200 1-2.500 3-.3 2.500-.6 4.500-2.500 4M5 6.500h4" stroke="#7a5c10" strokeWidth="1.200" />
    <path d="M11.500 8.500l3 3-3 3-3-3z" fill="#ffe98f" stroke="#a87c14" />
  </Svg>
);

const AdvisorIcon = () => (
  <Svg w={17} h={16}>
    <path d="M3 6h9l-1 5-4 2-4-3z" fill="#f1d878" stroke="#a88428" />
    <path d="M.500 4.500C3 4 3 3 4 1.500c3-1.500 6-1 8 0 .5 2 2 1.500 4 2-2 4-11 5-15.500 1z" fill="#58aee0" stroke="#2a70a8" />
    <path d="M13 9l3 3-3 3.500-3-3.500z" fill="#ffd94a" stroke="#9a7210" />
  </Svg>
);

const ScriptIcon = () => (
  <Svg w={17} h={16}>
    <path d="M1 1.500h12v2.500h-2v6h2v2.500H1v-2.500h2v-6H1z" fill="#f7dc78" stroke="#b88c1c" />
    <path d="M5 5.500h1M8 5.500h1M5 8h4" stroke="#7a5c10" />
    <path d="M13 9l3 3-3 3.500-3-3.500z" fill="#ffd94a" stroke="#9a7210" />
  </Svg>
);

const Chevron = ({ down }: { down?: boolean }) => (
  <Svg w={9} h={6}>
    <path d={down ? "M1 1l3.500 3.500L8 1" : "M1 5l3.500-3.500L8 5"} stroke="#505050" strokeWidth="1.800" />
  </Svg>
);

const CloseMark = () => (
  <Svg w={8} h={8}>
    <path d="M1.500 1.500l5 5M6.500 1.500l-5 5" stroke="#000" strokeWidth="1.600" />
  </Svg>
);

/* ---------- pieces ---------- */

const T = ({ name, on, icon, children }: { name: string; on?: boolean; icon?: React.ReactNode; children?: React.ReactNode }) => (
  <Tool type="button" aria-label={name} aria-pressed={on} $on={on}>
    {icon}
    {children}
  </Tool>
);

const Toolbar = () => (
  <ToolRow role="toolbar">
    <Group $w={538}>
      <Grip />
      <T name="New chart" icon={I.newChart} />
      <Caret type="button" aria-label="Chart list" />
      <T name="Profiles" icon={I.profiles} />
      <Caret type="button" aria-label="Profile list" />
      <Sep />
      <T name="Market watch" on icon={I.market} />
      <T name="Data window" icon={I.target} />
      <T name="Navigator" on icon={I.folder} />
      <T name="Terminal" icon={I.dataWin} />
      <T name="Strategy tester" icon={I.tester} />
      <Sep />
      <Tool type="button" $wide>{I.order}Новый ордер</Tool>
      <T name="MetaEditor" icon={I.editor} />
      <Tool type="button" $wide $on>{I.hat}Авто-торговля</Tool>
    </Group>
    <Group $w={380}>
      <Grip />
      <T name="Bar chart" icon={I.bars} />
      <T name="Candlesticks" on icon={I.candle} />
      <T name="Line chart" icon={I.line} />
      <Sep />
      <T name="Zoom in" icon={I.zoomIn} />
      <T name="Zoom out" icon={I.zoomOut} />
      <T name="Tile windows" icon={I.tiles} />
      <Sep />
      <T name="Auto scroll" on icon={I.autoScroll} />
      <T name="Chart shift" icon={I.shift} />
      <Sep />
      <T name="Indicators" icon={I.indicator} />
      <Caret type="button" aria-label="Indicator list" />
      <T name="Periods" icon={I.clock} />
      <Caret type="button" aria-label="Period list" />
      <T name="Templates" icon={I.template} />
      <Caret type="button" aria-label="Template list" />
    </Group>
    <Group $w={310}>
      <Grip />
      <T name="Cursor" on icon={I.cursor} />
      <T name="Crosshair" icon={I.cross} />
      <Sep />
      <T name="Vertical line" icon={I.vline} />
      <T name="Horizontal line" icon={I.hline} />
      <T name="Trendline" icon={I.trend} />
      <T name="Channel" icon={I.channel} />
      <T name="Fibonacci" icon={I.fibo} />
      <T name="Text"><Letter>A</Letter></T>
      <T name="Text label"><Letter $boxed>T</Letter></T>
      <T name="Arrows" icon={I.arrows} />
      <Caret type="button" aria-label="Arrow list" />
    </Group>
    <Group $w={261}>
      <Grip />
      {["M1", "M5", "M15", "M30", "H1", "H4", "D1", "W1", "MN"].map((p) => (
        <Period key={p} type="button">{p}</Period>
      ))}
    </Group>
    <ToolFill />
    <Search>
      <SearchInput type="text" aria-label="Search" />
      {I.find}
    </Search>
    <ChatButton type="button" aria-label="Messages"><ChatBadge>5</ChatBadge></ChatButton>
  </ToolRow>
);

const MarketWatch = () => (
  <Panel>
    <PanelHead>
      <PanelTitle>Обзор рынка: 17:13:13</PanelTitle>
      <PanelClose type="button" aria-label="Close market watch"><CloseMark /></PanelClose>
    </PanelHead>
    <ListFrame $h={296}>
      <ListBody>
        <Quotes>
          <colgroup>
            <col width="83" />
            <col width="55" />
            <col width="56" />
          </colgroup>
          <thead>
            <tr><th>Символ</th><th>Бид</th><th>Аск</th></tr>
          </thead>
          <tbody>
            {QUOTES.map(([name, bid, ask, up], i) => (
              <tr key={i}>
                <SymbolCell><SymbolName><ArrowMark up={up} />{name}</SymbolName></SymbolCell>
                <PriceCell $up={up}>{bid}</PriceCell>
                <PriceCell $up={up}>{ask}</PriceCell>
              </tr>
            ))}
          </tbody>
        </Quotes>
      </ListBody>
      <ScrollTrack>
        <Chevron />
        <ArrowPad />
        <Thumb $grow={50} />
        <Gap $grow={212} />
        <Chevron down />
      </ScrollTrack>
    </ListFrame>
    <TabStrip>
      <Tab type="button" $active>Символы</Tab>
      <Tab type="button">Тиковый график</Tab>
    </TabStrip>
  </Panel>
);

const Navigator = () => (
  <Panel $grow>
    <PanelHead>
      <PanelTitle>Навигатор</PanelTitle>
      <PanelClose type="button" aria-label="Close navigator"><CloseMark /></PanelClose>
    </PanelHead>
    <ListFrame>
      <ListBody>
        <Tree>
          {INDICATORS.map((name, i) => (
            <TreeRow key={name}>
              <Trunk />
              <Branch $last={i === INDICATORS.length - 1} />
              <FuncIcon />
              <TreeLabel>{name}</TreeLabel>
            </TreeRow>
          ))}
          {[["Советники", <AdvisorIcon key="a" />], ["Скрипты", <ScriptIcon key="s" />]].map(([name, icon]) => (
            <RootRow key={name as string}>
              <Expander type="button" aria-label={`Expand ${name}`}>
                <Svg s={5}><path d="M2.500 0v5M0 2.500h5" stroke="#2d4a9a" /></Svg>
              </Expander>
              <Dots />
              {icon}
              <TreeLabel>{name}</TreeLabel>
            </RootRow>
          ))}
        </Tree>
      </ListBody>
      <ScrollTrack>
        <Chevron />
        <Gap $grow={212} />
        <Thumb $grow={303} />
        <ArrowPad />
        <Chevron down />
      </ScrollTrack>
    </ListFrame>
    <TabStrip>
      <Tab type="button" $active>Общие</Tab>
      <Tab type="button">Избранное</Tab>
      <TabEnd />
    </TabStrip>
  </Panel>
);

const PriceChart = () => (
  <Drawing shapeRendering="crispEdges" role="img" aria-label="EURUSD,M2">
    <g transform="translate(0 -82)">
      <path d="M0 388.500H4000" stroke="#778899" />
      {BRICKS.map((b, i) => {
        const x = barX(i);
        const top = LEVELS[b.top] + 0.5;
        const bottom = LEVELS[b.top + 1] + 0.5;
        return (
          <g key={i} stroke="#00ff00">
            {b.wick !== null && <path d={b.up ? `M${x} ${bottom}V${b.wick}` : `M${x} ${top}V${b.wick}`} />}
            <rect x={x - 2} y={top} width="4" height={bottom - top} fill={b.up ? "#000" : "#fff"} />
          </g>
        );
      })}
      <path d={`M${barX(BRICKS.length)} 374V419M${barX(BRICKS.length) - 2.5} 388.500h5`} stroke="#00ff00" />
    </g>
  </Drawing>
);

const MacdChart = () => (
  <Drawing role="img" aria-label="MACD">
    <g shapeRendering="crispEdges" stroke="#c0c0c0">
      {MACD.main.map((v, i) => (
        <path key={i} d={`M${barX(i)} ${MACD_ZERO}V${Math.round(macdY(v))}`} />
      ))}
    </g>
    <polyline
      points={MACD.signal.map((v, i) => `${barX(i)},${macdY(v)}`).slice(1).join(" ")}
      stroke="#ff0000"
      strokeDasharray="3 3"
      fill="none"
    />
  </Drawing>
);

const InfoPanel = () => (
  <Info>
    {BLOCKS.map((b) => (
      <InfoSection key={b.head[0]}>
        <InfoRule />
        <InfoRow $cols={b.cols} $head>
          {b.head.map((c, i) => <span key={i}>{c}</span>)}
        </InfoRow>
        <InfoRule />
        <InfoRows>
          {b.rows.map((r) => (
            <InfoRow key={r.cells[0]} $cols={r.cols ?? b.cols} $dim={r.dim}>
              {r.cells.map((c, i) => <span key={i}>{c}</span>)}
            </InfoRow>
          ))}
        </InfoRows>
      </InfoSection>
    ))}
  </Info>
);

const Chart = () => (
  <ChartWindow>
    <PaneRow>
      <Pane>
        <PriceChart />
        <PaneCaption $x={3}>
          <Svg w={7} h={4}><path d="M0 0h7L3.500 4z" fill="#fff" /></Svg>
          {"EURUSD,M2  1.09246 1.09292 1.09152 1.09246"}
        </PaneCaption>
        <ExpertTag>
          TestDriveNew v 2.0
          <Svg s={12}>
            <circle cx="6" cy="6" r="5.300" stroke="#fff" />
            <path d="M3.500 7c.8 2 4.200 2 5 0" stroke="#fff" />
            <path d="M4 3.500v1.500M8 3.500v1.500" stroke="#fff" />
          </Svg>
        </ExpertTag>
        <InfoPanel />
        <Highlight />
      </Pane>
      <Axis>
        {PRICES.map((p, i) => <AxisItem key={i}>{p}</AxisItem>)}
        <BidTag>1.09246</BidTag>
      </Axis>
    </PaneRow>
    <PaneRow $h={178}>
      <Pane>
        <MacdChart />
        <PaneCaption $x={4}>MACD(12,26,9) -0.000471 -0.000576</PaneCaption>
      </Pane>
      <MacdAxis>
        <MacdItem $row={1}>0.003218</MacdItem>
        <MacdItem $row={3}>0.00</MacdItem>
        <MacdItem $row={5}>-0.002886</MacdItem>
      </MacdAxis>
    </PaneRow>
    <Dates>
      {DATES.map((d) => <DateItem key={d}>{d}</DateItem>)}
    </Dates>
    <Watermark>
      <WatermarkTitle>Активация Windows</WatermarkTitle>
      <div>Чтобы активировать Windows, перейдите в раздел "Параметры".</div>
    </Watermark>
  </ChartWindow>
);

const Taskbar = () => (
  <TaskBar>
    <TaskPinned>
      <TaskButton type="button" aria-label="Start" $first>
        <Svg s={16}><path d="M0 2.300l6.500-.9v6H0zM7.500 1.200L16 0v7.400H7.500zM0 8.500h6.500v6L0 13.700zM7.500 8.500H16V16l-8.500-1.200z" fill="#fff" /></Svg>
      </TaskButton>
      <TaskButton type="button" aria-label="Search" $first>
        <Svg s={17}><circle cx="10.500" cy="6.500" r="5" stroke="#fff" strokeWidth="1.400" /><path d="M7 10.500L1 16.500" stroke="#fff" strokeWidth="1.400" /></Svg>
      </TaskButton>
      <TaskButton type="button" aria-label="Task view" $first>
        <Svg w={20} h={15}><path d="M4.500 1.500h11v12h-11zM3 2.500H.700v10H3M17 2.500h2.300v10H17" stroke="#fff" strokeWidth="1.200" /></Svg>
      </TaskButton>
    </TaskPinned>
    <TaskButton type="button" aria-label="Edge">
      <Svg s={20}><path d="M0 9C1 3.500 5 0 10.500 0 16.500 0 20 4 20 9.500V12H7c0 5 7 5.500 11.500 2.800V18C12 21.500 3 20.500 3 12.500c0-4 2.500-6 4.500-7C4.500 5.500 2 6.500 0 9zm7-1h7.500c0-5-6.500-5-7.500 0z" fill="#0f7fdc" /></Svg>
    </TaskButton>
    <TaskButton type="button" aria-label="Opera" $run>
      <Svg s={22}><ellipse cx="11" cy="11" rx="7.800" ry="8.500" stroke="#e01b24" strokeWidth="5" /><ellipse cx="11" cy="11" rx="4.300" ry="7.200" fill="#02050a" /></Svg>
    </TaskButton>
    <TaskButton type="button" aria-label="Internet Explorer">
      <Svg s={24}>
        <path d="M21.500 14.500H8.500c.5 4 6 4.500 7.500 1.500h5C18 23.500 3.500 23.500 3.500 12.500c0-11.500 18.500-12 18 2zM8.500 10.500h8c-.5-4.500-7.500-4.500-8 0z" fill="#45c3f3" />
        <path d="M20 5c3-3 1-5-4-2.500C8 6 2 15 2 20c0 3 4 1.500 6 0" stroke="#f5c52e" strokeWidth="1.800" />
      </Svg>
    </TaskButton>
    <TaskButton type="button" aria-label="Explorer" $run>
      <Svg s={22}><path d="M1 2h7l2 2h11v16H1z" fill="#f7d67a" /><path d="M1 6h20v14H1z" fill="#fde49a" /><path d="M4 20v-8h14v8h-4v-4H8v4z" fill="#2fa8e8" /></Svg>
    </TaskButton>
    <TaskButton type="button" aria-label="Store">
      <Svg s={22}><path d="M1 6l20 1.500v13L1 22z" fill="#fff" /><path d="M6 7V4c0-4 7-4 7 0v3" stroke="#fff" strokeWidth="1.500" /><path d="M5 10.500l4.500-.5v4H5zM11 9.800l6-.6V14h-6zM5 15.500h4.500v3.800L5 19zM11 15.500h6v4.700l-6-.6z" fill="#02050a" /></Svg>
    </TaskButton>
    <TaskButton type="button" aria-label="Calculator" $run>
      <Svg w={18} h={24}><path d="M0 0h18v24H0z" fill="#fff" /><path d="M2 2h14v4H2z" fill="#02050a" /><path d="M3 9.500h13M3 13h13M3 16.500h13M3 20h13" stroke="#02050a" strokeWidth="2" strokeDasharray="2 2" /></Svg>
    </TaskButton>
    <TaskButton type="button" aria-label="MetaTrader" $run $focus>
      <Svg s={24}>
        <path d="M2 1h13v12H2z" fill="#a9cdf5" stroke="#4d86d0" /><path d="M2 2.500h13" stroke="#3f7ad8" strokeWidth="3" />
        <path d="M9 7h13v14H9z" fill="#dceaff" stroke="#4d86d0" /><path d="M11 16l3-5 2 5 4-6" stroke="#4d86d0" />
        <circle cx="7" cy="11" r="3.500" fill="#f0b070" stroke="#a86020" /><path d="M1 23c0-10 12-10 12 0z" fill="#62b53a" stroke="#347a18" />
      </Svg>
    </TaskButton>
    <TaskButton type="button" aria-label="MetaEditor">
      <Svg s={24}>
        <path d="M1 9l11 11v3.500L1 13zM23 12L12 20v3.500l11-8z" fill="#e0b850" stroke="#8a6420" />
        <path d="M7 1l16 11-11 8.500L1 9.500z" fill="#f6ecc8" stroke="#8a6420" />
        <circle cx="12" cy="10.500" r="5" fill="#2f7d4a" /><path d="M8 9c3-3 5-2 8-1l-4 5z" fill="#3d86d8" />
        <path d="M12 9l3 3-3 3z" fill="#e8c23c" />
      </Svg>
    </TaskButton>
    <Tray>
      <TrayIcons>
        <Svg w={13} h={8}><path d="M1 7l5.500-5.500L12 7" stroke="#fff" strokeWidth="1.400" /></Svg>
        <Svg s={16}><path d="M4.500 2.500h11v8h-11zM1.500 1.500h4v4h-4zM3.500 5.500v8M10 10.500v3M6 14h8" stroke="#fff" strokeWidth="1.200" /></Svg>
        <Svg s={16}><path d="M1 5.500h2.500L7 2.500v11l-3.500-3H1zM9 5.500c1 1.500 1 3.500 0 5M11 4c2 2.500 2 5.500 0 8" stroke="#fff" strokeWidth="1.200" /><path d="M13.500 2.500c2.500 3.500 2.500 7.500 0 11" stroke="#777" /></Svg>
        <Svg s={16}><path d="M1 8c0-3 3-6 7-6s6 3 6 6l-4 4H5C2 12 1 10 1 8z" fill="#e8e8e8" /><path d="M2 9c3-4 7-4 10-1" stroke="#444" /><circle cx="11.500" cy="11.500" r="4.500" fill="#3aa53a" /><path d="M9.500 11.500l1.500 1.500 2.500-3" stroke="#fff" strokeWidth="1.300" /></Svg>
        <Svg s={16}><path d="M0 1h16v12h-5.500L8 15.500 5.500 13H0z" fill="#fff" /><path d="M3 4.500h10M3 7.500h10M3 10.500h6" stroke="#02050a" /></Svg>
      </TrayIcons>
      <Lang>РУС</Lang>
      <Clock>18:13<br />30.12.2015</Clock>
      <ShowDesktop type="button" aria-label="Show desktop" />
    </Tray>
  </TaskBar>
);

const Traffic = () => (
  <Svg w={24} h={14}>
    {Array.from({ length: 8 }, (_, i) => (
      <g key={i} shapeRendering="crispEdges">
        <rect x={i * 3} y="0" width="2" height={10 - i} fill="#5d7a1c" />
        <rect x={i * 3} y={11 - i} width="2" height={3 + i} fill="#10475e" />
      </g>
    ))}
  </Svg>
);

export default function App() {
  return (
    <Shell>
      <GlobalStyle />
      <TitleBar>
        {I.logo}
        <TitleText>9725765: Alpari-ECN-Demo - Демо Счет - [EURUSD,M2 (offline)]</TitleText>
        <WindowButton type="button" aria-label="Minimize"><Svg s={11}><path d="M0 5.500h11" stroke="#000" /></Svg></WindowButton>
        <WindowButton type="button" aria-label="Restore"><Svg s={11}><path d="M.500 3.500h7v7h-7zM2.500 3.500v-3h8v7.500h-3" stroke="#000" /></Svg></WindowButton>
        <WindowButton type="button" aria-label="Close"><Svg s={11}><path d="M.500 .500l10 10M10.500 .500l-10 10" stroke="#000" strokeWidth="1.200" /></Svg></WindowButton>
      </TitleBar>
      <MenuBar>
        {I.doc}
        <MenuList>
          {["Файл", "Вид", "Вставка", "Графики", "Сервис", "Окно", "Справка"].map((m) => (
            <li key={m}><MenuItem type="button">{m}</MenuItem></li>
          ))}
        </MenuList>
        <ChildButton type="button" aria-label="Minimize chart"><Svg s={9}><path d="M1.500 7h6" stroke="#6d7d90" strokeWidth="2" /></Svg></ChildButton>
        <ChildButton type="button" aria-label="Restore chart"><Svg s={9}><path d="M.500 4h5v4.500h-5zM2.500 4V1h6v5.500H6" stroke="#6d7d90" /><path d="M2.500 1.500h6M.500 4h5" stroke="#6d7d90" strokeWidth="2" /></Svg></ChildButton>
        <ChildButton type="button" aria-label="Close chart"><Svg s={9}><path d="M1.500 1l6 7M7.500 1l-6 7" stroke="#6d7d90" strokeWidth="2" /></Svg></ChildButton>
      </MenuBar>
      <Toolbar />
      <Body>
        <Side>
          <MarketWatch />
          <Navigator />
        </Side>
        <Work>
          <Chart />
          <ChartTabs>
            <ChartTabRow>
              <ChartTab type="button">EURUSD,M1</ChartTab>
              <ChartTab type="button" $active>EURUSD,M2 (offline)</ChartTab>
              <TabScroll>
                <Svg w={5} h={8}><path d="M5 0v8L0 4z" fill="#8a8a8a" /></Svg>
                <Svg w={5} h={8}><path d="M0 0v8l5-4z" fill="#8a8a8a" /></Svg>
              </TabScroll>
            </ChartTabRow>
          </ChartTabs>
        </Work>
      </Body>
      <Status>
        <StatusText>Для справки, нажмите F1</StatusText>
        <StatusCell $w={152}>Default</StatusCell>
        {[142, 96, 95, 92, 94, 90].map((w, i) => <StatusCell key={i} $w={w} />)}
        <StatusCell $w={166}><Traffic />3446/1 kb</StatusCell>
      </Status>
      <Taskbar />
    </Shell>
  );
}
